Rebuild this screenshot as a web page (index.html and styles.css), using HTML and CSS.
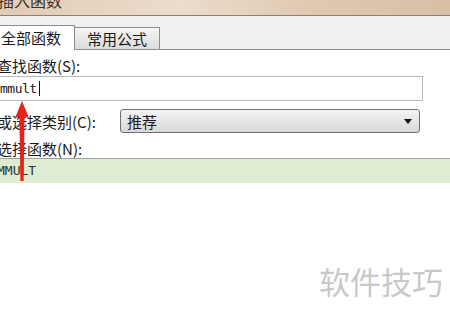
FILE: index.html
```html
<!DOCTYPE html>
<html lang="zh-CN">
<head>
  <meta charset="UTF-8">
  <title>插入函数</title>
  <link rel="stylesheet" href="styles.css">
</head>
<body>
  <div class="title-bar"><span class="title-text">插入函数</span></div>

  <div class="tab-strip">
    <div class="tab active">全部函数</div>
    <div class="tab">常用公式</div>
  </div>

  <div class="panel">
    <div class="field-label">查找函数(<u>S</u>):</div>
    <div class="search-box"><span class="mono">mmult</span><span class="caret"></span></div>

    <div class="category-row">
      <span class="field-label">或选择类别(<u>C</u>):</span>
      <div class="select-box">
        <span>推荐</span>
        <span class="select-arrow"></span>
      </div>
    </div>

    <div class="field-label pick-label">选择函数(<u>N</u>):</div>
    <div class="func-list">
      <div class="func-item mono">MMULT</div>
    </div>
  </div>

  <svg class="red-arrow" width="20" height="84" viewBox="0 0 20 84">
    <path d="M10 0 L17 17 L12.6 15.5 L11.6 80 L8.4 80 L7.4 15.5 L3 17 Z" fill="#e3231c"/>
  </svg>

  <div class="watermark">软件技巧</div>
</body>
</html>
```

FILE: styles.css
```css
body {
  margin: 0;
  width: 450px;
  height: 316px;
  overflow: hidden;
  position: relative;
  background-color: #ffffff;
  font-family: "Noto Sans CJK SC", "Liberation Sans", sans-serif;
  font-size: 15px;
  color: #1a1a1a;
}

.title-bar {
  height: 15px;
  overflow: hidden;
  background: linear-gradient(to right, #e2cbb4, #ecdccb 40%, #e0c8b0 70%, #d8bfa6);
  border-bottom: 1px solid #8f7f70;
}

.title-text {
  display: block;
  margin-top: -10px;
  margin-left: -2px;
  font-size: 16px;
  line-height: 20px;
  color: #3a3028;
}

.tab-strip {
  display: flex;
  align-items: flex-end;
  height: 33px;
  margin-left: -3px;
  background-color: #f0f0f0;
  border-bottom: 1px solid #8e9298;
}

.tab {
  height: 21px;
  padding: 0 12px;
  line-height: 21px;
  font-size: 15px;
  background: linear-gradient(#f5f5f5, #dcdcdc);
  border: 1px solid #8d8d8d;
  border-bottom: none;
  margin-left: -1px;
}

.tab.active {
  height: 24px;
  line-height: 24px;
  padding: 0 13px 0 3px;
  background: #ffffff;
  margin-bottom: -1px;
  position: relative;
  z-index: 1;
  border-color: #898c95;
  margin-left: 0;
}

.panel {
  margin-left: -3px;
  padding-top: 6px;
}

.field-label {
  line-height: 19px;
  white-space: nowrap;
}

.field-label u {
  text-decoration: none;
}

.mono {
  font-family: "DejaVu Sans Mono", "Liberation Mono", monospace;
  font-size: 13px;
}

.search-box {
  display: flex;
  align-items: center;
  height: 23px;
  width: 422px;
  margin-top: 1px;
  border: 1px solid #b3b8bd;
  padding-left: 2px;
}

.search-box .mono {
  letter-spacing: -0.5px;
}

.caret {
  width: 1px;
  height: 15px;
  background-color: #111;
  margin-left: 2px;
}

.category-row {
  display: flex;
  align-items: center;
  margin-top: 8px;
}

.select-box {
  display: flex;
  align-items: center;
  justify-content: space-between;
  margin-left: 24px;
  width: 286px;
  height: 22px;
  padding: 0 6px;
  border: 1px solid #707070;
  border-radius: 3px;
  background: linear-gradient(#f4f4f4, #e6e6e6 50%, #d7d7d7);
}

.select-arrow {
  width: 0;
  height: 0;
  border-left: 4px solid transparent;
  border-right: 4px solid transparent;
  border-top: 5px solid #111;
  margin-right: 1px;
}

.pick-label {
  margin-top: 6px;
}

.func-list {
  border-top: 1px solid #a0a0a0;
}

.func-item {
  height: 24px;
  line-height: 24px;
  background-color: #deecd2;
  color: #333;
}

.red-arrow {
  position: absolute;
  left: 12px;
  top: 101px;
}

.watermark {
  position: absolute;
  left: 319px;
  top: 262px;
  font-size: 31px;
  line-height: 38px;
  color: #c9c9c9;
}
```
